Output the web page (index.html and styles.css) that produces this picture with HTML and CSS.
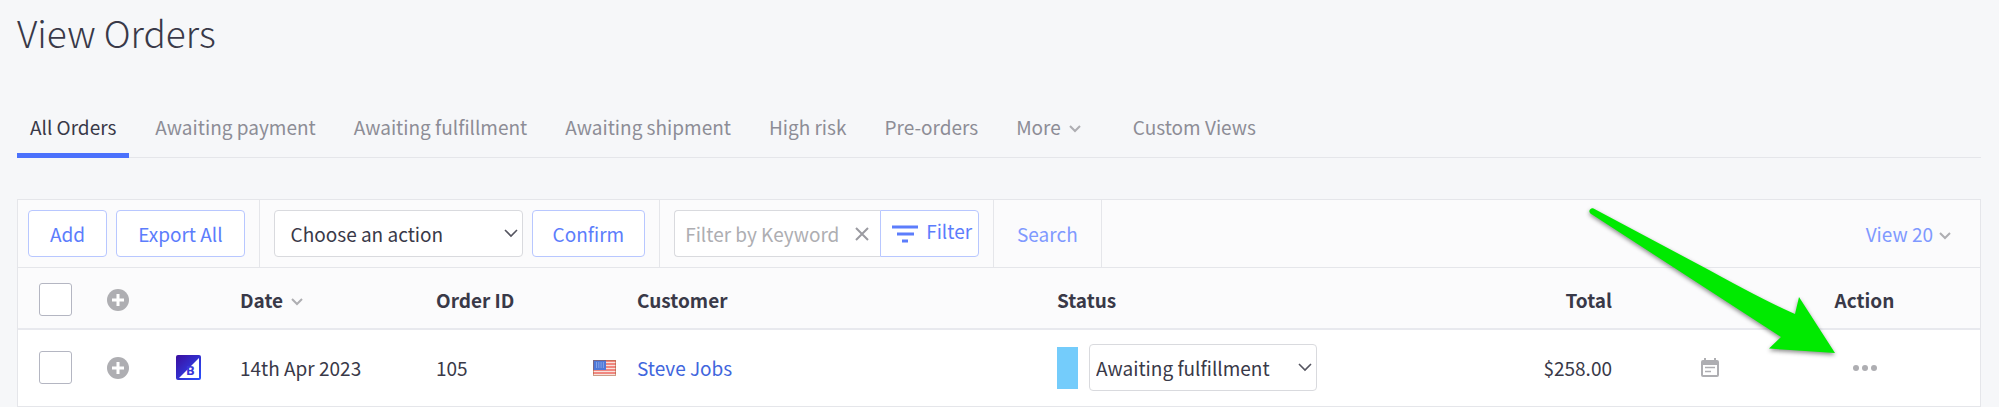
FILE: index.html
```
<!DOCTYPE html>
<html lang="en"><head>
<meta charset="utf-8">
<title>View Orders</title>
<link rel="stylesheet" href="styles.css">
</head><body>

<h1 class="title">View Orders</h1>

<nav class="tabs">
<a class="tab active" href="#all">All Orders</a>
<a class="tab" href="#payment">Awaiting payment</a>
<a class="tab" href="#fulfillment">Awaiting fulfillment</a>
<a class="tab" href="#shipment">Awaiting shipment</a>
<a class="tab" href="#risk">High risk</a>
<a class="tab" href="#preorders">Pre-orders</a>
<button class="tab more" type="button">More <svg class="chevron" viewBox="0 0 12 8"><path d="M1 1l5 5 5-5"/></svg></button>
<a class="tab" href="#custom">Custom Views</a>
</nav>

<div class="panel">
<div class="toolbar">
	<div class="group">
		<button class="btn" type="button">Add</button>
		<button class="btn" type="button">Export All</button>
	</div>
	<div class="group">
		<select class="select bulk" aria-label="Choose an action"><option>Choose an action</option></select>
		<button class="btn" type="button">Confirm</button>
	</div>
	<div class="group">
		<div class="filter">
			<div class="keyword">
				<input class="keyword-input" type="text" placeholder="Filter by Keyword" aria-label="Filter by Keyword">
				<button class="clear" type="button" aria-label="Clear"><svg width="14" height="14" viewBox="0 0 14 14"><path d="M1 1l12 12M13 1L1 13"/></svg></button>
			</div>
			<button class="btn filter-btn" type="button"><svg width="26" height="18" viewBox="0 0 26 18"><path d="M0 2h26M5 9h17M10 16h6"/></svg><span>Filter</span></button>
		</div>
	</div>
	<div class="group search"><a class="link" href="#search">Search</a></div>
	<button class="link view" type="button">View 20 <svg class="chevron" viewBox="0 0 12 8"><path d="M1 1l5 5 5-5"/></svg></button>
</div>

<table class="orders">
<colgroup>
<col class="c-check"><col class="c-plus"><col class="c-source"><col class="c-date"><col class="c-id"><col class="c-flag"><col class="c-customer"><col class="c-status"><col class="c-total"><col class="c-note"><col class="c-action">
</colgroup>
<thead>
<tr>
	<th class="check"><input class="box" type="checkbox" aria-label="Select all orders"></th>
	<th class="icon"><button class="icon-btn" type="button" aria-label="Expand all"><svg width="22" height="22" viewBox="0 0 22 22"><circle cx="11" cy="11" r="11" fill="#aeaeb2"/><path d="M11 5v12M5 11h12" stroke="#fff" stroke-width="3"/></svg></button></th>
	<th></th>
	<th>Date <svg class="chevron sort" viewBox="0 0 12 8"><path d="M1 1l5 5 5-5"/></svg></th>
	<th>Order ID</th>
	<th></th>
	<th>Customer</th>
	<th>Status</th>
	<th class="total">Total</th>
	<th></th>
	<th class="action">Action</th>
</tr>
</thead>
<tbody>
<tr>
	<td class="check"><input class="box" type="checkbox" aria-label="Select order 105"></td>
	<td class="icon"><button class="icon-btn" type="button" aria-label="Expand order 105"><svg width="22" height="22" viewBox="0 0 22 22"><circle cx="11" cy="11" r="11" fill="#aeaeb2"/><path d="M11 5v12M5 11h12" stroke="#fff" stroke-width="3"/></svg></button></td>
	<td class="icon"><svg width="25" height="25" viewBox="0 0 25 25">
		<defs><linearGradient id="brand" x1="0" y1="0" x2="1" y2="1"><stop offset="0" stop-color="#3b0d9e"/><stop offset="1" stop-color="#2a52ff"/></linearGradient></defs>
		<rect width="25" height="25" rx="2" fill="url(#brand)"/>
		<path d="M23 3v20H3z" fill="#fff"/>
		<text class="brand-letter" x="10" y="20">B</text>
	</svg></td>
	<td>14th Apr 2023</td>
	<td>105</td>
	<td class="icon"><svg width="23" height="16" viewBox="0 0 23 16">
		<rect width="23" height="16" fill="#f7e3dc"/>
		<path d="M0 1h23M0 4h23M0 7h23M0 10h23M0 13h23" stroke="#ee6a62" stroke-width="1.6"/>
		<rect width="13" height="10" fill="#4f78d8"/>
		<path d="M3 3h8M3 5h8M3 7h8" stroke="#b9cdf5" stroke-dasharray="1 1.3"/>
		<rect x=".5" y=".5" width="22" height="15" fill="none" stroke="#a5552f" stroke-opacity=".5"/>
	</svg></td>
	<td><a class="customer" href="#customer">Steve Jobs</a></td>
	<td><div class="status"><span class="swatch"></span><select class="select state" aria-label="Order status"><option>Awaiting fulfillment</option></select></div></td>
	<td class="total">$258.00</td>
	<td class="icon"><svg width="18" height="20" viewBox="0 0 18 20">
		<path d="M2 2h1V0h2v2h8V0h2v2h1q2 0 2 2v13q0 2-2 2H2q-2 0-2-2V4q0-2 2-2z" fill="#aeaeb2"/>
		<path d="M2 7h14v10H2z" fill="#fff"/>
		<path d="M4 9.5h10M4 13.500h6" stroke="#aeaeb2" stroke-width="1.6"/>
	</svg></td>
	<td class="action"><button class="icon-btn" type="button" aria-label="Order actions"><svg width="24" height="6" viewBox="0 0 24 6"><g fill="#aeaeb2"><circle cx="3" cy="3" r="3"/><circle cx="12" cy="3" r="3"/><circle cx="21" cy="3" r="3"/></g></svg></button></td>
</tr>
</tbody>
</table>

<svg class="pointer" width="250" height="150" viewBox="0 0 250 150"><path d="M4.5 0.5C2 -.5 -1 2.500 1 5Q2 6 3 6.500L192 129L180 140.500L246 145L210 89L206 106Q178 94 120 62Z"/></svg>
</div>

</body></html>
```

FILE: styles.css
```
*{box-sizing:border-box;}
body{margin:0;padding:8px 18px 0 17px;background:#f6f7f9;color:#393948;font:19px/28px "Noto Sans CJK SC","Noto Sans",sans-serif;}
button,input,select{margin:0;font:inherit;color:inherit;}
button{border:0;padding:0;background:none;cursor:pointer;}
a{text-decoration:none;}
svg{display:block;}

.title{margin:0;font-size:37px;line-height:48px;font-weight:300;}

.tabs{display:flex;gap:12px;margin-top:52px;border-bottom:1px solid #e5e6ea;}
.tab{margin-bottom:-1px;border-bottom:5px solid transparent;padding:5px 13px 12px;color:#8d8d96;white-space:nowrap;}
.tab.active{margin-right:1px;border-color:#4b71fc;color:#393948;}
.more{display:flex;align-items:center;gap:8px;margin-right:14px;}

.chevron{width:12px;height:8px;margin-top:4px;fill:none;stroke:#aeaeb2;stroke-width:2;}
.sort{display:inline-block;margin:0 0 2px 4px;}

.panel{position:relative;margin-top:41px;border:1px solid #e5e6ea;background:#fbfbfc;}
.toolbar{display:flex;border-bottom:1px solid #e5e6ea;}
.group{display:flex;align-items:center;gap:9px;border-right:1px solid #e5e6ea;padding:10px 14px;}
.group:first-child{padding-left:10px;}
.btn{height:47px;border:1px solid #b8c7ff;border-radius:4px;padding:0 20px;background:#fff;color:#5c7dfc;white-space:nowrap;}
.group:first-child .btn{padding:0 21px;}
.select{height:47px;border:1px solid #d9dade;border-radius:4px;background:#fff url("data:image/svg+xml,%3Csvg xmlns='http://www.w3.org/2000/svg' width='14' height='9'%3E%3Cpath d='M1 1l6 6 6-6' fill='none' stroke='%23555560' stroke-width='1.6'/%3E%3C/svg%3E") no-repeat right 4px center;appearance:none;}
.bulk{width:249px;padding:0 16px;}
.state{width:228px;padding:0 6px;}

.filter{display:flex;}
.keyword{display:flex;align-items:center;width:206px;height:47px;border:1px solid #d9dade;border-right:0;border-radius:4px 0 0 4px;padding:0 11px 0 10px;background:#fff;}
.keyword-input{flex:1;min-width:0;border:0;padding:0;background:none;outline:0;}
.keyword-input::placeholder{color:#aeaeb2;opacity:1;}
.clear svg{fill:none;stroke:#9b9ba1;stroke-width:2;}
.filter-btn{display:flex;align-items:center;gap:8px;border-radius:0 4px 4px 0;padding:0 6px 0 11px;}
.filter-btn span{padding-bottom:5px;}
.filter-btn svg{fill:none;stroke:#5c7dfc;stroke-width:3;}
.search{padding:10px 23px;}
.link{color:#7f99ff;}
.view{display:flex;align-items:center;gap:6px;margin-left:auto;padding-right:29px;}

.orders{width:100%;border-collapse:collapse;table-layout:fixed;}
.orders th,.orders td{padding:0 12px;text-align:left;white-space:nowrap;}
.orders th{height:61px;border-bottom:2px solid #e8e9ee;padding-top:3px;font-weight:700;}
.orders td{height:77px;border-bottom:1px solid #e5e6ea;background:#fff;}
.orders .check{padding-left:21px;}
.orders .icon{padding-left:0;padding-right:0;}
.orders .icon svg{margin:0 auto;}
.orders .total{text-align:right;}
.orders .action{padding-left:0;padding-right:46px;text-align:center;}
.icon-btn{display:block;margin:0 auto;}
.c-check{width:70px;}
.c-plus{width:60px;}
.c-source{width:80px;}
.c-date{width:196px;}
.c-id{width:160px;}
.c-flag{width:41px;}
.c-customer{width:420px;}
.c-total{width:160px;}
.c-note{width:171px;}
.c-action{width:185px;}

.box{display:block;width:33px;height:33px;border:1px solid #b4b6c2;border-radius:3px;background:#fff;appearance:none;}
.box:checked{border-color:#4b71fc;background:#4b71fc;}
.brand-letter{fill:#3a36d8;font:bold 13px "Noto Sans",sans-serif;}
.customer{color:#4166dd;}
.status{display:flex;align-items:center;gap:11px;}
.swatch{width:21px;height:42px;background:#74ccfb;}

.pointer{position:absolute;top:8px;right:141px;overflow:visible;fill:#00ea00;filter:drop-shadow(0 2px 2px rgba(0,0,0,.45));pointer-events:none;}
```
